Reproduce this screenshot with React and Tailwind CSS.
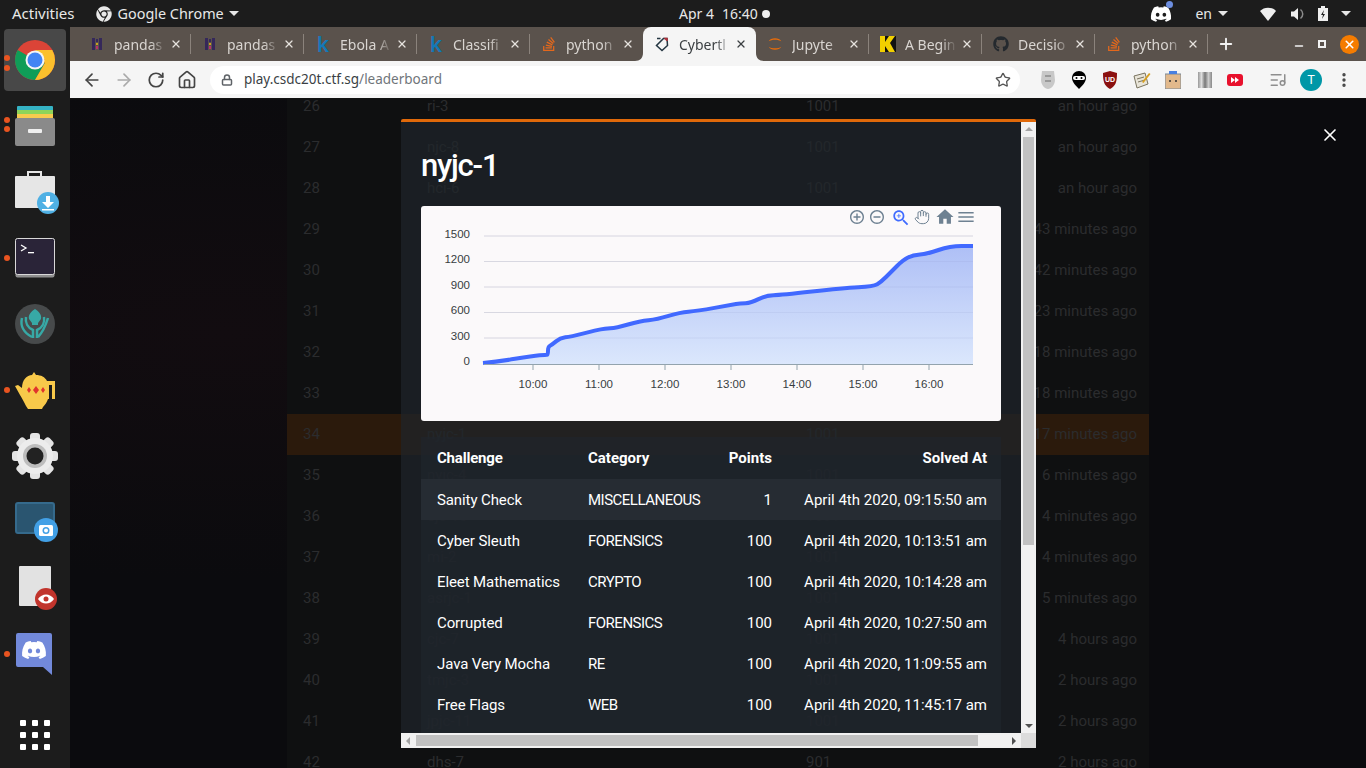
import React from 'react';
import { ArrowLeft, ArrowRight, RotateCw, Home, Lock, Star, X, Plus, Minus, EllipsisVertical, ListMusic, Hand } from 'lucide-react';
import { FaChrome, FaDiscord, FaGithub, FaStackOverflow } from 'react-icons/fa';

const uiFont = { fontFamily: '"Noto Sans", sans-serif' };

const rows = [
  [26, 'ri-3', '1001', 'an hour ago'],
  [27, 'njc-8', '1001', 'an hour ago'],
  [28, 'hci-6', '1001', 'an hour ago'],
  [29, 'vjc-2', '1001', '43 minutes ago'],
  [30, 'rvhs-3', '1001', '42 minutes ago'],
  [31, 'acjc-9', '1001', '23 minutes ago'],
  [32, 'tjc-5', '1001', '18 minutes ago'],
  [33, 'sajc-2', '1001', '18 minutes ago'],
  [34, 'nyjc-1', '1001', '17 minutes ago'],
  [35, 'nyjc-4', '1001', '6 minutes ago'],
  [36, 'ejc-10', '1001', '4 minutes ago'],
  [37, 'mi-2', '1001', '4 minutes ago'],
  [38, 'asrjc-1', '1001', '5 minutes ago'],
  [39, 'cjc-7', '1001', '4 hours ago'],
  [40, 'tmjc-3', '1001', '2 hours ago'],
  [41, 'jpjc-11', '1001', '2 hours ago'],
  [42, 'dhs-7', '901', '2 hours ago'],
];

const solves = [
  ['Sanity Check', 'MISCELLANEOUS', '1', 'April 4th 2020, 09:15:50 am'],
  ['Cyber Sleuth', 'FORENSICS', '100', 'April 4th 2020, 10:13:51 am'],
  ['Eleet Mathematics', 'CRYPTO', '100', 'April 4th 2020, 10:14:28 am'],
  ['Corrupted', 'FORENSICS', '100', 'April 4th 2020, 10:27:50 am'],
  ['Java Very Mocha', 'RE', '100', 'April 4th 2020, 11:09:55 am'],
  ['Free Flags', 'WEB', '100', 'April 4th 2020, 11:45:17 am'],
];

const PandasIcon = () => (
  <svg width="16" height="16" viewBox="0 0 16 16">
    <rect x="3" y="2" width="3" height="12" fill="#35285a" />
    <rect x="10" y="2" width="3" height="12" fill="#35285a" />
    <rect x="7" y="3" width="2" height="3" fill="#35285a" />
    <rect x="7" y="7" width="2" height="2" fill="#c8a020" />
    <rect x="7" y="10" width="2" height="3" fill="#b8306a" />
  </svg>
);
const KaggleIcon = () => <span className="block w-4 text-[21px] leading-4 font-semibold text-[#1479b8] text-center" style={uiFont}>k</span>;
const SoIcon = () => <FaStackOverflow size={16} color="#e4681c" />;
const ShieldIcon = () => (
  <svg width="16" height="16" viewBox="0 0 16 16" fill="none">
    <path d="M3 2.500h3.500M9.500 2.500H13l.5 7L8 14.500 2.500 9.500z" stroke="#243642" strokeWidth="1.500" />
    <path d="M9.500 1.700H13.700l.2 3-1.500.3z" fill="#b0303a" />
  </svg>
);
const JupyterIcon = () => (
  <svg width="18" height="18" viewBox="0 0 18 18" fill="#e86c0a">
    <path d="M2 6c1.500-4.500 12.500-4.500 14 0-3-2.500-11-2.500-14 0z" />
    <path d="M2 12c1.500 4.500 12.500 4.500 14 0-3 2.500-11 2.500-14 0z" />
  </svg>
);
const KIcon = () => (
  <svg width="16" height="16" viewBox="0 0 16 16">
    <rect width="16" height="16" fill="#111" />
    <path d="M0 0h5v6l4-6h6l-5 7 5 9H9L5 10v6H0z" fill="#f2d000" />
  </svg>
);
const GithubIcon = () => <FaGithub size={16} color="#24292e" />;

const tabs = [
  [PandasIcon, 'pandas'],
  [PandasIcon, 'pandas'],
  [KaggleIcon, 'Ebola A'],
  [KaggleIcon, 'Classifi'],
  [SoIcon, 'python'],
  [ShieldIcon, 'Cybertl', true],
  [JupyterIcon, 'Jupyte'],
  [KIcon, 'A Begin'],
  [GithubIcon, 'Decisio'],
  [SoIcon, 'python'],
];

const Tab = ({ icon: Icon, label, active, last }) => (
  <div className={`relative flex items-center w-[113px] h-[34px] shrink-0 pl-[11px] ${active ? 'bg-[#f5f5f5] rounded-t-lg text-[#3c4043]' : 'text-[#d9d5d1]'}`}>
    <span className="w-4 h-4 flex items-center justify-center shrink-0"><Icon /></span>
    <span className="ml-[9px] w-[52px] overflow-hidden whitespace-nowrap text-[14px] [mask-image:linear-gradient(to_right,black_70%,transparent)]" style={uiFont}>{label}</span>
    <X size={12} strokeWidth={2.5} className={`ml-1 ${active ? 'text-[#3c4043]' : 'text-[#e6e2de]'}`} />
    {!active && !last && <span className="absolute right-0 top-[7px] h-5 w-px bg-[#8b837c]" />}
    {active && (
      <>
        <svg width="8" height="8" className="absolute -left-2 bottom-0"><path d="M8 0v8H0c5 0 8-3 8-8z" fill="#f5f5f5" /></svg>
        <svg width="8" height="8" className="absolute -right-2 bottom-0"><path d="M0 0v8h8C3 8 0 5 0 0z" fill="#f5f5f5" /></svg>
      </>
    )}
  </div>
);

const Caret = ({ className = '' }) => <span className={`inline-block w-0 h-0 border-l-[5px] border-r-[5px] border-t-[5px] border-l-transparent border-r-transparent border-t-[#e6e6e6] ${className}`} />;

const TopBar = () => (
  <div className="h-[27px] bg-[#1c1c1c] flex items-center text-[14px] text-[#e8e8e8] relative shrink-0" style={uiFont}>
    <span className="ml-3 text-[15px]">Activities</span>
    <FaChrome size={16} className="ml-[21px] text-[#e8e8e8]" />
    <span className="ml-[6px] text-[14.400px]">Google Chrome</span>
    <Caret className="ml-[5px]" />
    <div className="absolute left-[679px] top-0 h-[27px] flex items-center">
      <span>Apr 4</span>
      <span className="ml-2">16:40</span>
      <span className="ml-1 w-2 h-2 rounded-full bg-[#eeeeee]" />
    </div>
    <div className="ml-auto flex items-center">
      <span className="relative">
        <FaDiscord size={22} className="text-white" />
        <span className="absolute -right-px -top-[2px] w-[7px] h-[7px] rounded-full bg-[#6d8ee0]" />
      </span>
      <span className="ml-[23px]">en</span>
      <Caret className="ml-[6px]" />
      <svg width="16" height="14" viewBox="0 0 16 14" className="ml-[32px]"><path d="M0 4c4-4.500 12-4.500 16 0l-8 10z" fill="#eeeeee" /></svg>
      <svg width="16" height="16" viewBox="0 0 16 16" className="ml-[14px]">
        <path d="M1 5.500h3L8 2v12l-4-3.500H1z" fill="#eeeeee" />
        <path d="M10.500 3.500c3 2.500 3 6.500 0 9" fill="none" stroke="#8a8a8a" strokeWidth="1.500" />
      </svg>
      <svg width="10" height="15" viewBox="0 0 10 15" className="ml-[12px]"><path d="M3 0h4v2h3v13H0V2h3z" fill="#eeeeee" /><path d="M6 4 3 9h2l-1 4 3-5H5z" fill="#1c1c1c" /></svg>
      <Caret className="ml-[13px] mr-[15px]" />
    </div>
  </div>
);

const Dot = () => <span className="w-[6px] h-[6px] rounded-full bg-[#e95420]" />;

const ChromeLogo = () => (
  <svg width="40" height="40" viewBox="0 0 40 40">
    <circle cx="20" cy="20" r="20" fill="#db4437" />
    <path d="M20 20 2.700 10A20 20 0 0 0 20 40l10-17.300z" fill="#0f9d58" />
    <path d="M20 20h20A20 20 0 0 1 20 40l10-17.300z" fill="#fbc02d" />
    <path d="M20 10h17.300A20 20 0 0 1 40 20H30z" fill="#fbc02d" />
    <circle cx="20" cy="20" r="9.500" fill="#f5f5f5" />
    <circle cx="20" cy="20" r="7.500" fill="#4285f4" />
  </svg>
);
const FilesIcon = () => (
  <svg width="40" height="40" viewBox="0 0 40 40">
    <rect x="2" y="0" width="36" height="6" rx="1" fill="#35b3c4" />
    <rect x="2" y="4" width="36" height="6" fill="#8ed45a" />
    <rect x="2" y="8" width="36" height="6" fill="#f8cb4e" />
    <rect x="0" y="12" width="40" height="28" rx="2" fill="#8a8a8a" />
    <rect x="13" y="23" width="14" height="4" rx="1" fill="#efefef" />
  </svg>
);
const DownloadsIcon = () => (
  <svg width="44" height="44" viewBox="0 0 44 44">
    <path d="M13 6V2h13v4" fill="none" stroke="#e6e6e6" strokeWidth="2" />
    <rect x="0" y="6" width="40" height="32" rx="1" fill="#e6e6e6" />
    <circle cx="33" cy="33" r="11" fill="#4fb0e4" />
    <path d="M31 26h4v6h4l-6 6-6-6h4z M27 39h12v1.500H27z" fill="#fff" />
  </svg>
);
const TerminalIcon = () => (
  <svg width="40" height="40" viewBox="0 0 40 40">
    <rect x="0.500" y="0.500" width="39" height="39" rx="2" fill="#8f8f8f" />
    <rect x="0.500" y="0.500" width="39" height="36" rx="2" fill="#2a2438" stroke="#d8d8d8" />
    <path d="M6 7l5 3-5 3" fill="none" stroke="#fff" strokeWidth="1.300" />
    <rect x="13" y="14" width="6" height="1.300" fill="#fff" />
  </svg>
);
const KrakenIcon = () => (
  <svg width="40" height="40" viewBox="0 0 40 40">
    <circle cx="20" cy="20" r="20" fill="#474a4b" />
    <path d="M20 5c4 2.500 7 6 6 10l-3 4v2h-6v-2l-3-4c-1-4 2-7.500 6-10z" fill="#37a9a6" />
    <path d="M7 14c-2 8 2 15 10 19M33 14c-2.500 8-6 15-10 19" fill="none" stroke="#37a9a6" strokeWidth="2.500" />
    <path d="M11 13c-1 6 2 11 7 13v8M29 13c1 6-2 11-7 13v8" fill="none" stroke="#37a9a6" strokeWidth="2.500" />
  </svg>
);
const TeapotIcon = () => (
  <svg width="40" height="37" viewBox="0 0 40 37">
    <path d="M19 0l2 3c5 0 9 2 11 6h8v18h-7c-1 3-3 6-5 8l-1 2H13l-2-3C9 30 7 26 5 23L0 14l3-1 4 3c0-8 5-13 10-13z" fill="#f8c94a" />
    <rect x="34" y="13" width="3" height="14" fill="#1c1c1c" />
    <path d="M21 14l3 4-3 4-3-4zM14 15l2 3-2 3-2-3zM28 15l2 3-2 3-2-3z" fill="#e0342c" />
  </svg>
);
const GearIcon = () => (
  <svg width="46" height="46" viewBox="0 0 46 46">
    <g fill="#e4e4e4">
      {[0, 45, 90, 135, 180, 225, 270, 315].map(a => (
        <rect key={a} x="18" y="0" width="10" height="12" rx="3" transform={`rotate(${a} 23 23)`} />
      ))}
    </g>
    <circle cx="23" cy="23" r="18" fill="#ececec" />
    <circle cx="23" cy="23" r="12" fill="#bdbdbd" />
    <circle cx="23" cy="23" r="8.500" fill="#222" />
  </svg>
);
const ScreenshotIcon = () => (
  <svg width="44" height="40" viewBox="0 0 44 40">
    <rect x="1" y="1" width="38" height="30" rx="2" fill="#2a5570" stroke="#356a8c" strokeWidth="2" />
    <circle cx="31" cy="28" r="12" fill="#42a0e6" />
    <rect x="24" y="23" width="14" height="11" rx="1.500" fill="#fff" />
    <circle cx="31" cy="28.500" r="3.500" fill="#42a0e6" />
    <circle cx="31" cy="28.500" r="2" fill="#fff" />
  </svg>
);
const ViewerIcon = () => (
  <svg width="40" height="44" viewBox="0 0 40 44">
    <rect x="2" y="0" width="32" height="40" rx="1" fill="#e2e2e2" />
    <circle cx="29" cy="33" r="11" fill="#c1342c" />
    <path d="M21 33c4-6 12-6 16 0-4 6-12 6-16 0z" fill="#fff" />
    <circle cx="29" cy="33" r="2.500" fill="#c1342c" />
  </svg>
);
const DiscordTile = () => (
  <svg width="38" height="42" viewBox="0 0 38 42">
    <path d="M2 0h32a2 2 0 0 1 2 2v40l-9-8H2a2 2 0 0 1-2-2V2a2 2 0 0 1 2-2z" fill="#7289da" />
    <foreignObject x="5" y="4" width="26" height="26"><FaDiscord size={26} color="#fff" /></foreignObject>
  </svg>
);

const Dock = () => (
  <div className="w-[70px] bg-[#1c1c1c] shrink-0 flex flex-col">
    <div className="relative h-[66px] flex items-center justify-center">
      <div className="w-[62px] h-[62px] rounded bg-[#484848] flex items-center justify-center"><ChromeLogo /></div>
      <div className="absolute left-1 top-7 flex flex-col gap-1"><Dot /><Dot /></div>
    </div>
    <div className="relative h-[66px] flex items-center justify-center"><FilesIcon /><div className="absolute left-1 top-[24px] flex flex-col gap-[3px]"><Dot /><Dot /></div></div>
    <div className="h-[66px] flex items-center justify-center pl-1"><DownloadsIcon /></div>
    <div className="relative h-[66px] flex items-center justify-center"><TerminalIcon /><div className="absolute left-1 top-[30px] flex"><Dot /></div></div>
    <div className="h-[66px] flex items-center justify-center"><KrakenIcon /></div>
    <div className="relative h-[66px] flex items-center justify-center"><TeapotIcon /><div className="absolute left-1 top-[30px] flex"><Dot /></div></div>
    <div className="h-[66px] flex items-center justify-center"><GearIcon /></div>
    <div className="h-[66px] flex items-center justify-center pl-1"><ScreenshotIcon /></div>
    <div className="h-[66px] flex items-center justify-center pl-1"><ViewerIcon /></div>
    <div className="relative h-[66px] flex items-center justify-center"><DiscordTile /><div className="absolute left-1 top-[30px] flex"><Dot /></div></div>
    <div className="mt-auto mb-[18px] mx-auto grid grid-cols-3 gap-[6px]">
      {Array.from({ length: 9 }).map((_, i) => <span key={i} className="w-[6px] h-[6px] bg-white rounded-[1px]" />)}
    </div>
  </div>
);

const ExtIcons = () => (
  <div className="flex items-center">
    <svg width="16" height="20" viewBox="0 0 16 20" className="ml-[20px]"><path d="M2 1h12l1 9c0 5-4 9-7 9s-7-4-7-9z" fill="#c8c8c8" /><path d="M5 6h6M5 11h6" stroke="#8a8a8a" strokeWidth="1.500" /></svg>
    <svg width="16" height="20" viewBox="0 0 16 20" className="ml-[15px]"><path d="M8 1c4 0 7 3 7 7s-4 8-7 11C5 16 1 12 1 8s3-7 7-7z" fill="#000" /><rect x="2" y="6" width="12" height="4" rx="2" fill="#fff" /><circle cx="5.500" cy="8" r="1" fill="#000" /><circle cx="10.500" cy="8" r="1" fill="#000" /></svg>
    <svg width="16" height="18" viewBox="0 0 16 18" className="ml-[15px]"><path d="M8 0l7 2c0 8-1 13-7 16C2 15 1 10 1 2z" fill="#8b1010" /><text x="8" y="11" textAnchor="middle" fontSize="7" fontWeight="700" fill="#fff" fontFamily="Liberation Sans, sans-serif">UD</text></svg>
    <svg width="18" height="18" viewBox="0 0 18 18" className="ml-[15px]"><path d="M1 5l11-3 3 11-11 4z" fill="#e8e4d8" stroke="#7a7460" /><path d="M4 8l7-2M5 11l7-2" stroke="#7a7460" /><path d="M9 11l7-9 1.500 1-7 9z" fill="#d8a020" /></svg>
    <svg width="16" height="18" viewBox="0 0 16 18" className="ml-[14px]"><rect y="3" width="16" height="15" fill="#e2b98c" stroke="#7a8a9a" /><rect x="4" width="8" height="3" fill="#4a80e0" /><circle cx="5" cy="10" r="1" fill="#333" /><circle cx="11" cy="10" r="1" fill="#333" /></svg>
    <div className="ml-[17px] w-[14px] h-4 bg-[linear-gradient(to_right,#999,#ddd,#777,#ccc,#888)]" />
    <svg width="16" height="12" viewBox="0 0 16 12" className="ml-[15px]"><rect width="16" height="12" rx="3" fill="#e8112d" /><path d="M4 3l4 3-4 3zM8 3l4 3-4 3z" fill="#fff" /></svg>
    <ListMusic size={18} className="ml-[26px] text-[#8e8e8e]" />
    <span className="ml-[13px] w-[22px] h-[22px] rounded-full bg-[#0097a7] text-white text-[13px] flex items-center justify-center" style={uiFont}>T</span>
    <EllipsisVertical size={18} strokeWidth={2.500} className="ml-[13px] text-[#444]" />
  </div>
);

const Chrome = () => (
  <>
    <div className="h-[34px] bg-[#5a524c] flex items-center pl-2 shrink-0">
      {tabs.map(([icon, label, active], i) => <Tab key={i} icon={icon} label={label} active={active} last={i === 4} />)}
      <Plus size={18} strokeWidth={2.5} className="ml-[9px] text-[#f2f2f2]" />
      <Minus size={12} strokeWidth={3} className="ml-[58px] mt-[4px] text-[#f2f2f2]" />
      <span className="ml-[13px] w-[8px] h-[8px] border-2 border-[#f2f2f2]" />
      <span className="ml-[14px] w-[19px] h-[19px] rounded-full bg-[#f57c00] flex items-center justify-center"><X size={13} strokeWidth={3} className="text-white" /></span>
    </div>
    <div className="h-[37px] bg-[#f5f5f5] flex items-center border-b border-[#111] shrink-0 box-content">
      <ArrowLeft size={20} className="ml-3 text-[#444]" />
      <ArrowRight size={20} className="ml-3 text-[#aaa]" />
      <RotateCw size={18} strokeWidth={2.300} className="ml-[13px] text-[#444]" />
      <Home size={20} className="ml-3 text-[#444]" />
      <div className="ml-[13px] w-[810px] h-7 rounded-full bg-white flex items-center">
        <Lock size={12} strokeWidth={3} className="ml-[11px] text-[#5f6368]" />
        <span className="ml-[11px] text-[13.500px] text-[#3a3f44]" style={uiFont}>play.csdc20t.ctf.sg<span className="text-[#70757a]">/leaderboard</span></span>
        <Star size={16} className="ml-auto mr-[9px] text-[#555]" />
      </div>
      <ExtIcons />
    </div>
  </>
);

const linePts = [[483,363],[497,361.7],[533,356],[546,354.7],[548,354.7],[548,346.7],[552,344.7],[560,338],[570.5,336.7],[597,330],[604.4,328.7],[616,328],[640,321],[657,319.3],[680,312.3],[697,311],[732,304.7],[740,303.3],[751,303],[766,295.3],[781,295],[843,288],[873.5,286.3],[881,282],[891,272],[903,260],[913,255],[927,254],[950,246],[973,246]];

// round the corners of the series a little, like a smooth area chart
const smoothLine = pts => {
  let d = `M${pts[0][0]} ${pts[0][1]}`;
  for (let i = 1; i < pts.length - 1; i++) {
    const mx = (pts[i][0] + pts[i + 1][0]) / 2;
    const my = (pts[i][1] + pts[i + 1][1]) / 2;
    d += ` Q${pts[i][0]} ${pts[i][1]} ${mx} ${my}`;
  }
  const last = pts[pts.length - 1];
  return `${d} L${last[0]} ${last[1]}`;
};
const linePath = smoothLine(linePts);
const areaPath = `${linePath} L973 364 L483 364 Z`;

const ToolIcon = ({ d, x, y, s, fill = '#6e8192' }) => (
  <g transform={`translate(${x - 12 * s} ${y - 12 * s}) scale(${s})`} fill={fill}><path d={d} /></g>
);

const Chart = () => (
  <div className="h-[215px] bg-[#fbf9fa] rounded-[3px]">
    <svg width="580" height="215" viewBox="421 206 580 215" fontFamily='"Liberation Sans", Arial, sans-serif' fontSize="11.500" fill="#373d3f">
      <defs>
        <linearGradient id="area" x1="0" y1="0" x2="0" y2="1">
          <stop offset="0" stopColor="#aebff6" />
          <stop offset="1" stopColor="#dbe7fc" />
        </linearGradient>
      </defs>
      {[236, 261.5, 287, 312.500, 338].map(y => <line key={y} x1="484" x2="973" y1={y} y2={y} stroke="#e6e3e6" />)}
      <path d={areaPath} fill="url(#area)" />
      {[236, 261.5, 287, 312.500, 338].map(y => <line key={y} x1="484" x2="973" y1={y} y2={y} stroke="#8a9ac8" strokeOpacity="0.15" />)}
      <path d={linePath} fill="none" stroke="#4169ff" strokeWidth="4" strokeLinejoin="round" />
      <line x1="484" x2="973" y1="364.500" y2="364.500" stroke="#93a3ad" />
      {[['1500', 238], ['1200', 263], ['900', 289], ['600', 314], ['300', 340], ['0', 365]].map(([t, y]) => (
        <text key={t} x="470" y={y} textAnchor="end">{t}</text>
      ))}
      {['10:00', '11:00', '12:00', '13:00', '14:00', '15:00', '16:00'].map((t, i) => (
        <g key={t}>
          <line x1={533 + i * 66} x2={533 + i * 66} y1="365" y2="370" stroke="#93a3ad" />
          <text x={533 + i * 66} y="388" textAnchor="middle">{t}</text>
        </g>
      ))}
      <ToolIcon x={857} y={217} s={0.7} d="M13 7h-2v4H7v2h4v4h2v-4h4v-2h-4V7zm-1-5C6.480 2 2 6.480 2 12s4.480 10 10 10 10-4.480 10-10S17.520 2 12 2zm0 18c-4.410 0-8-3.590-8-8s3.590-8 8-8 8 3.590 8 8-3.590 8-8 8z" />
      <ToolIcon x={877} y={217} s={0.7} d="M7 11v2h10v-2H7zm5-9C6.480 2 2 6.480 2 12s4.480 10 10 10 10-4.480 10-10S17.520 2 12 2zm0 18c-4.410 0-8-3.590-8-8s3.590-8 8-8 8 3.590 8 8-3.590 8-8 8z" />
      <ToolIcon x={901} y={218} s={0.85} fill="#3f6bff" d="M15.500 14h-.79l-.28-.27C15.410 12.590 16 11.110 16 9.500 16 5.910 13.090 3 9.500 3S3 5.910 3 9.500 5.910 16 9.500 16c1.610 0 3.090-.59 4.230-1.570l.27.28v.79l5 4.990L20.490 19l-4.990-5zm-6 0C7.010 14 5 11.990 5 9.500S7.010 5 9.500 5 14 7.010 14 9.500 11.990 14 9.500 14zM12 10h-2v2H9v-2H7V9h2V7h1v2h2v1z" />
      <Hand x={914} y={209} size={16} color="#6e8192" strokeWidth={1.500} />
      <ToolIcon x={945} y={217} s={0.85} d="M10 20v-6h4v6h5v-8h3L12 3 2 12h3v8z" />
      <ToolIcon x={966} y={217} s={0.85} d="M3 18h18v-2H3v2zm0-5h18v-2H3v2zm0-7v2h18V6H3z" />
    </svg>
  </div>
);

const SolveTable = () => (
  <div className="mt-4 pb-6 bg-[#1f252c]/70 text-white text-[15px]">
    <div className="h-[42px] flex items-center pl-4 pr-[14px] font-bold">
      <span className="w-[151px] tracking-[-0.2px]">Challenge</span>
      <span className="w-[112px]">Category</span>
      <span className="w-[72px] text-right">Points</span>
      <span className="flex-1 text-right">Solved At</span>
    </div>
    {solves.map((s, i) => (
      <div key={s[0]} className={`h-[41px] flex items-center pt-px pl-4 pr-[14px] whitespace-nowrap ${i === 0 ? 'bg-[#262c33]' : ''}`}>
        <span className="w-[151px] tracking-[-0.1px]">{s[0]}</span>
        <span className="w-[112px] tracking-[-0.5px]">{s[1]}</span>
        <span className="w-[72px] text-right">{s[2]}</span>
        <span className="flex-1 text-right">{s[3]}</span>
      </div>
    ))}
  </div>
);

const Modal = () => (
  <div className="absolute left-[331px] top-[20px] w-[635px] h-[629px] border-t-[3px] border-[#e0690a] rounded-t-[2px] flex flex-col" style={{ fontFamily: 'Roboto, sans-serif' }}>
    <div className="flex flex-1 min-h-0">
      <div className="flex-1 overflow-hidden bg-[#20252b]/70 px-5">
        <h1 className="mt-[24px] h-[40px] text-[31px] leading-10 font-medium tracking-[-1.2px] text-white">nyjc-1</h1>
        <div className="mt-5"><Chart /></div>
        <SolveTable />
      </div>
      <div className="w-[15px] bg-[#f1f1f1] flex flex-col items-center">
        <span className="mt-[5px] w-0 h-0 border-l-4 border-r-4 border-b-4 border-l-transparent border-r-transparent border-b-[#a3a3a3]" />
        <span className="mt-[6px] w-[11px] h-[408px] bg-[#c1c1c1]" />
        <span className="mt-auto mb-[5px] w-0 h-0 border-l-4 border-r-4 border-t-4 border-l-transparent border-r-transparent border-t-[#505050]" />
      </div>
    </div>
    <div className="h-[15px] flex shrink-0">
      <div className="flex-1 bg-[#f1f1f1] flex items-center">
        <span className="ml-[5px] w-0 h-0 border-t-4 border-b-4 border-r-4 border-t-transparent border-b-transparent border-r-[#a3a3a3]" />
        <span className="ml-[6px] w-[562px] h-[11px] bg-[#c1c1c1]" />
        <span className="ml-auto mr-[5px] w-0 h-0 border-t-4 border-b-4 border-l-4 border-t-transparent border-b-transparent border-l-[#505050]" />
      </div>
      <div className="w-[15px] bg-[#dcdcdc]" />
    </div>
  </div>
);

const Leaderboard = () => (
  <div className="w-[862px] mx-auto -mt-[13px] bg-[#0f1011] text-[#2b2c2e] text-[15px]" style={{ fontFamily: 'Roboto, sans-serif' }}>
    {rows.map(r => (
      <div key={r[0]} className={`h-[41px] flex items-center pl-4 pr-3 ${r[0] === 34 ? 'bg-[#2b1a0c]' : ''}`}>
        <span className="w-[124px]">{r[0]}</span>
        <span className="w-[379px]">{r[1]}</span>
        <span>{r[2]}</span>
        <span className="ml-auto">{r[3]}</span>
      </div>
    ))}
  </div>
);

export default function App() {
  return (
    <div className="w-[1366px] h-[768px] overflow-hidden bg-[#1c1c1c] flex flex-col">
      <TopBar />
      <div className="flex flex-1 min-h-0">
        <Dock />
        <div className="flex-1 min-w-0 flex flex-col">
          <Chrome />
          <div className="relative flex-1 min-h-0 overflow-hidden bg-[#0b0b0e] bg-[radial-gradient(ellipse_at_12%_35%,#120c10_0%,#0b0b0e_40%)]">
            <Leaderboard />
            <Modal />
            <X size={20} strokeWidth={2} className="absolute left-[1250px] top-[26px] text-white" />
          </div>
        </div>
      </div>
    </div>
  );
}
